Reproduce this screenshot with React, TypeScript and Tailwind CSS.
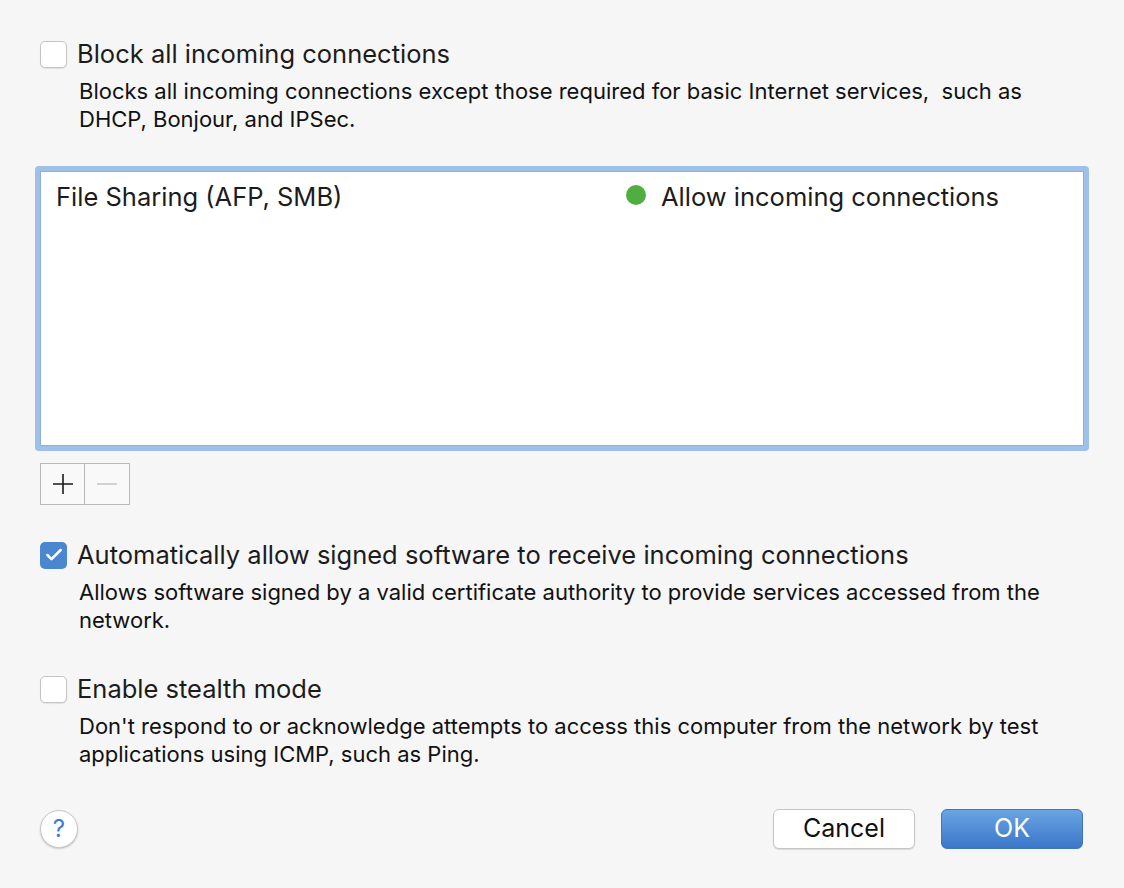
import { Check } from 'lucide-react'

const font = { fontFamily: 'Inter, "Liberation Sans", Arial, sans-serif' }

const Checkbox = ({ checked }: { checked?: boolean }) =>
  checked ? (
    <div className="w-[27px] h-[27px] shrink-0 rounded-[5px] bg-[#4b87d1] flex items-center justify-center">
      <Check className="w-[20px] h-[20px] text-white" strokeWidth={3} />
    </div>
  ) : (
    <div className="w-[27px] h-[27px] shrink-0 rounded-[5px] bg-white border border-[#c4c4c4] shadow-[0_1px_1px_rgba(0,0,0,0.08)]" />
  )

const Option = ({
  title,
  lines,
  checked,
}: {
  title: string
  lines: string[]
  checked?: boolean
}) => (
  <div>
    <div className="flex items-center gap-[10px]">
      <Checkbox checked={checked} />
      <span className="text-[25.5px] leading-[30px] text-[#1c1c1c]">{title}</span>
    </div>
    <div className="pl-[39px] mt-[8px] text-[22px] leading-[28px] text-[#111]">
      {lines.map((l, i) => (
        <div key={i} className="whitespace-pre">
          {l}
        </div>
      ))}
    </div>
  </div>
)

export default function App() {
  return (
    <div className="w-[1124px] h-[888px] bg-[#f6f6f6] pt-[39px] px-[40px]" style={font}>
      <Option
        title="Block all incoming connections"
        lines={[
          'Blocks all incoming connections except those required for basic Internet services,  such as',
          'DHCP, Bonjour, and IPSec.',
        ]}
      />

      <div className="mt-[33px] -ml-[5px] w-[1054px] h-[285px] rounded-[4px] bg-[#9dc1e8] p-[5px]">
        <div className="h-full bg-white border border-[#8fb0d6] flex items-start pt-[11px] text-[25.5px] leading-[28px] text-[#1c1c1c]">
          <div className="pl-[15px] w-[585px]">File Sharing (AFP, SMB)</div>
          <div className="flex items-center">
            <span className="w-[20px] h-[20px] rounded-full bg-[#4fae3f] mr-[15px] -mt-[4px]" />
            <span>Allow incoming connections</span>
          </div>
        </div>
      </div>

      <div className="mt-[12px] flex w-[90px] h-[42px] border border-[#b8b8b8] bg-[#f9f9f9]">
        <div className="w-[44px] h-full border-r border-[#b8b8b8] flex items-center justify-center">
          <svg width="22" height="22" viewBox="0 0 22 22">
            <path d="M11 1v20M1 11h20" stroke="#1a1a1a" strokeWidth="1.6" />
          </svg>
        </div>
        <div className="flex-1 flex items-center justify-center">
          <svg width="22" height="22" viewBox="0 0 22 22">
            <path d="M1 11h20" stroke="#c9c9c9" strokeWidth="1.6" />
          </svg>
        </div>
      </div>

      <div className="mt-[35px]">
        <Option
          checked
          title="Automatically allow signed software to receive incoming connections"
          lines={[
            'Allows software signed by a valid certificate authority to provide services accessed from the',
            'network.',
          ]}
        />
      </div>

      <div className="mt-[40px]">
        <Option
          title="Enable stealth mode"
          lines={[
            "Don't respond to or acknowledge attempts to access this computer from the network by test",
            'applications using ICMP, such as Ping.',
          ]}
        />
      </div>

      <div className="mt-[41px] flex items-center">
        <div className="w-[38px] h-[38px] rounded-full bg-white border border-[#c8c8c8] shadow-[0_1px_2px_rgba(0,0,0,0.2)] flex items-center justify-center text-[24px] text-[#3d7bd0]">
          ?
        </div>
        <div className="ml-auto mr-[1px] flex gap-[26px]">
          <button className="w-[142px] h-[40px] rounded-[6px] bg-white border border-[#c6c6c6] shadow-[0_1px_1px_rgba(0,0,0,0.12)] text-[25px] text-[#111]">
            Cancel
          </button>
          <button className="w-[142px] h-[40px] rounded-[6px] bg-gradient-to-b from-[#6aa4e3] to-[#3b76c8] border border-[#3f74be] text-[25px] text-white">
            OK
          </button>
        </div>
      </div>
    </div>
  )
}
